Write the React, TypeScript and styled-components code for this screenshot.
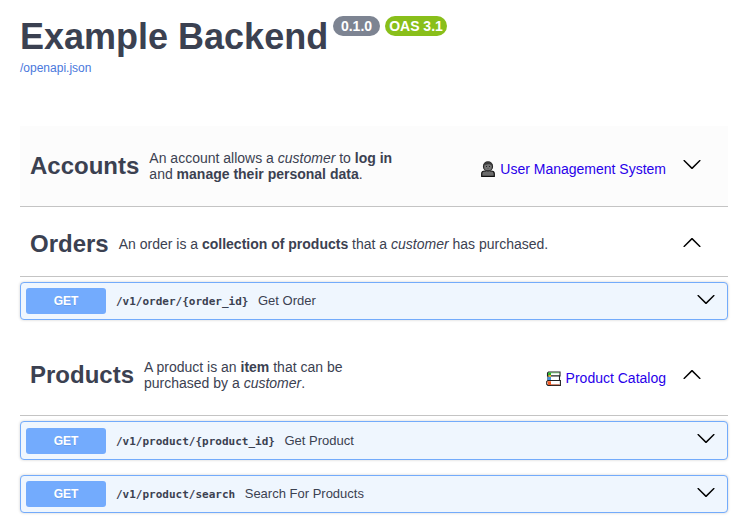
import React from "react";
import styled, { createGlobalStyle } from "styled-components";

const Global = createGlobalStyle`
  body { margin: 0; background: #fff; color: #3b4151; font-family: "Liberation Sans", Arial, sans-serif; }
  * { box-sizing: border-box; }
`;

const Page = styled.main`
  width: 748px;
  height: 532px;
  padding: 0 20px;
  overflow: hidden;
`;
const Header = styled.header`
  height: 126px;
  padding-top: 16px;
`;
const TitleRow = styled.div`
  display: flex;
  align-items: flex-start;
  height: 43px;
`;
const Title = styled.h1`
  margin: 0 5px 0 0;
  width: 308px;
  font-size: 36px;
  line-height: 41px;
  white-space: nowrap;
`;
const Badge = styled.span<{ $color: string; $width: number }>`
  width: ${(p) => p.$width}px;
  height: 20px;
  margin-right: 5px;
  border-radius: 10px;
  background: ${(p) => p.$color};
  color: #fff;
  font-size: 14px;
  font-weight: 700;
  line-height: 21px;
  text-align: center;
  white-space: nowrap;
`;
const SpecLink = styled.a`
  display: block;
  color: #4a78dc;
  font-size: 12px;
  line-height: 18px;
  text-decoration: none;
`;
const TagHeader = styled.section<{ $height: number; $shaded?: boolean; $top?: number }>`
  display: flex;
  align-items: center;
  height: ${(p) => p.$height}px;
  padding: ${(p) => p.$top ?? 0}px 26px 0 10px;
  border-bottom: 1px solid #c4c4c4;
  background: ${(p) => (p.$shaded ? "#fcfcfc" : "#fff")};
`;
const TagName = styled.h2`
  margin: 0 10px 0 0;
  font-size: 24px;
  line-height: 28px;
`;
const Description = styled.p`
  flex: 1;
  margin: 0;
  font-size: 14px;
  line-height: 16px;
  white-space: nowrap;
`;
const DocsLink = styled.a`
  display: flex;
  align-items: center;
  gap: 5px;
  margin: 6px 16px 0 0;
  color: #2800ea;
  font-size: 14px;
  line-height: 18px;
  text-decoration: none;
  white-space: nowrap;
`;
const Toggle = styled.div<{ $lift: number }>`
  height: 20px;
  margin-bottom: ${(p) => p.$lift}px;
`;
const Operations = styled.div<{ $gap: number; $after: number }>`
  display: grid;
  gap: ${(p) => p.$gap}px;
  padding: 5px 0 ${(p) => p.$after}px;
`;
const Operation = styled.div<{ $tall: boolean }>`
  display: flex;
  align-items: center;
  height: ${(p) => (p.$tall ? 39 : 38)}px;
  padding: ${(p) => (p.$tall ? 1 : 0)}px 11px 0 5px;
  border: 1px solid #73abfb;
  border-radius: 4px;
  background: #eff6fe;
  box-shadow: 0 0 3px rgba(0, 0, 0, 0.19);
`;
const Method = styled.span`
  width: 80px;
  height: 26px;
  border-radius: 3px;
  background: #73abfd;
  color: #fff;
  font-size: 12px;
  font-weight: 700;
  line-height: 26px;
  text-align: center;
  text-shadow: 0 1px 0 rgba(0, 0, 0, 0.1);
`;
const Path = styled.code`
  margin: 1px 9.5px 0 10px;
  font: 700 11px/16px "DejaVu Sans Mono", monospace;
`;
const Summary = styled.span`
  flex: 1;
  font-size: 13px;
  line-height: 16px;
`;

function Chevron({ up = false }: { up?: boolean }) {
  return (
    <svg width="20" height="20" viewBox="0 0 20 20" display="block">
      <path
        d={
          up
            ? "M17.418 14.908c.272.268.709.268.979 0s.271-.701 0-.969l-7.908-7.83c-.27-.268-.707-.268-.979 0l-7.908 7.83c-.27.268-.27.701 0 .969.271.268.709.268.979 0L10 7.767z"
            : "M17.418 6.109c.272-.268.709-.268.979 0s.271.701 0 .969l-7.908 7.83c-.27.268-.707.268-.979 0l-7.908-7.83c-.27-.268-.27-.701 0-.969.271-.268.709-.268.979 0L10 13.25z"
        }
      />
    </svg>
  );
}

function PersonIcon() {
  return (
    <svg width="14" height="16" viewBox="0 0 14 16">
      <path d="M.7 15.3v-2.600C.7 11 2 10 4 10h6c2 0 3.300 1 3.300 2.700v2.600z" fill="#6c6c6c" stroke="#111" strokeWidth="1.200" />
      <path d="M5 8.500h4v2.300H5z" fill="#666" />
      <circle cx="7" cy="5.400" r="4.500" fill="#747474" stroke="#252525" strokeWidth="1.200" />
      <path d="M2.500 5V4c0-4 9-4 9 0v1C9.500 3.300 8 2.800 6 3.500L3.200 4z" fill="#3a3a3a" />
      <path d="M5 5h1v1H5zM8 5h1v1H8z" fill="#222" />
      <path d="M6 7.500h2v.5H6z" fill="#555" />
    </svg>
  );
}

function BooksIcon() {
  return (
    <svg width="15" height="15" viewBox="0 0 15 15">
      <path d="M2.500 1H14v4H1.500V2z" fill="#fff" stroke="#222" strokeWidth="1.100" />
      <path d="M2 5h11.500v4.500H2z" fill="#fff" stroke="#222" strokeWidth="1.100" />
      <path d="M2 9.500h12.400v5H2l-1.300-1.300V10.500z" fill="#fff" stroke="#222" strokeWidth="1.100" />
      <path d="M2.200 1.500H5v2.500H2z" fill="#20b526" />
      <path d="M5 1.800h8.400" stroke="#4cae48" strokeWidth=".7" />
      <path d="M2.500 4.200H5v1.500H2.500z" fill="#ffc51b" />
      <path d="M1.500 6H5v3H1.500z" fill="#4690d8" />
      <path d="M1.300 10.200H5v3.700H2.200z" fill="#f15a24" />
      <path d="M5 13.700h8.800" stroke="#b8492b" strokeWidth=".8" />
    </svg>
  );
}

function OperationRow({ path, summary, tall = false }: { path: string; summary: string; tall?: boolean }) {
  return (
    <Operation $tall={tall}>
      <Method>GET</Method>
      <Path>{path}</Path>
      <Summary>{summary}</Summary>
      <Toggle $lift={tall ? 6 : 4}><Chevron /></Toggle>
    </Operation>
  );
}

export default function App() {
  return (
    <Page>
      <Global />
      <Header>
        <TitleRow>
          <Title>Example Backend</Title>
          <Badge $color="#7d8492" $width={47}>0.1.0</Badge>
          <Badge $color="#89bf1a" $width={62}>OAS 3.1</Badge>
        </TitleRow>
        <SpecLink>/openapi.json</SpecLink>
      </Header>

      <TagHeader $height={81} $shaded>
        <TagName>Accounts</TagName>
        <Description>
          An account allows a <em>customer</em> to <b>log in</b><br />
          and <b>manage their personal data</b>.
        </Description>
        <DocsLink><PersonIcon />User Management System</DocsLink>
        <Toggle $lift={4}><Chevron /></Toggle>
      </TagHeader>

      <TagHeader $height={70} $top={5}>
        <TagName>Orders</TagName>
        <Description>
          An order is a <b>collection of products</b> that a <em>customer</em> has purchased.
        </Description>
        <Toggle $lift={4}><Chevron up /></Toggle>
      </TagHeader>
      <Operations $gap={0} $after={15}>
        <OperationRow path="/v1/order/{order_id}" summary="Get Order" />
      </Operations>

      <TagHeader $height={81}>
        <TagName>Products</TagName>
        <Description>
          A product is an <b>item</b> that can be<br />
          purchased by a <em>customer</em>.
        </Description>
        <DocsLink><BooksIcon />Product Catalog</DocsLink>
        <Toggle $lift={2}><Chevron up /></Toggle>
      </TagHeader>
      <Operations $gap={15} $after={15}>
        <OperationRow path="/v1/product/{product_id}" summary="Get Product" tall />
        <OperationRow path="/v1/product/search" summary="Search For Products" />
      </Operations>
    </Page>
  );
}
